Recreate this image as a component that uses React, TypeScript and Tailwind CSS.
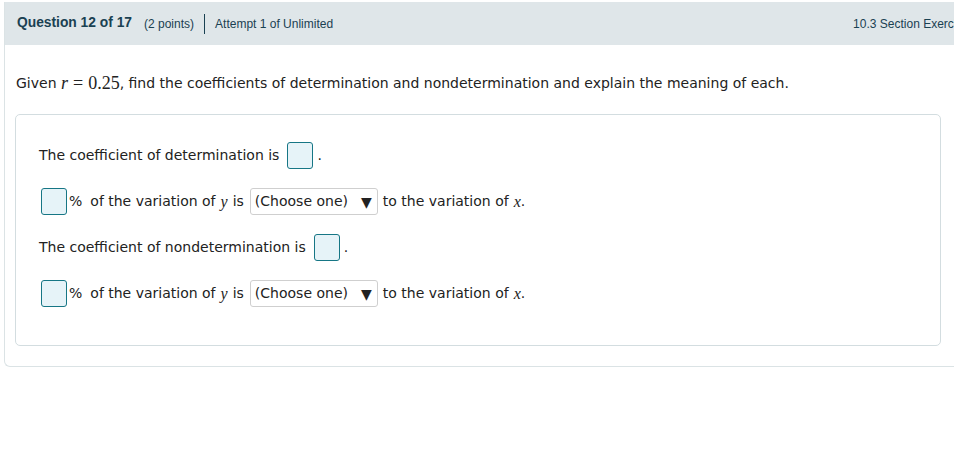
import React from "react";

const sans = "font-['Liberation_Sans',Arial,sans-serif]";
const body = "font-['DejaVu_Sans',Verdana,sans-serif]";
const math = "font-['Liberation_Serif','Times_New_Roman',serif]";

function Blank() {
  return (
    <span className="inline-block w-[26px] h-[27px] rounded-[3px] border border-[#167685] bg-[#e6f3f8] align-middle" />
  );
}

function ChooseOne() {
  return (
    <span className="inline-flex items-center h-[27px] w-[128px] px-[4px] rounded-[3px] border border-[#cfcfcf] bg-white text-[14px] text-[#222] align-middle">
      <span>(Choose one)</span>
      <span className="ml-auto mr-[1px] text-[14px] leading-none">▼</span>
    </span>
  );
}

function VariationRow() {
  return (
    <div className="flex items-center h-[27px] pl-[2px]">
      <Blank />
      <span className="ml-[2px]">%</span>
      <span className="ml-[8px]">of the variation of</span>
      <span className={`${math} italic text-[16px] ml-[5px]`}>y</span>
      <span className="ml-[5px]">is</span>
      <span className="ml-[6px]">
        <ChooseOne />
      </span>
      <span className="ml-[5px]">to the variation of</span>
      <span className={`${math} italic text-[16px] ml-[5px]`}>x</span>
      <span>.</span>
    </div>
  );
}

function CoefRow({ label }: { label: string }) {
  return (
    <div className="flex items-center h-[27px]">
      <span>{label}</span>
      <span className="ml-[8px]">
        <Blank />
      </span>
      <span className="ml-[4px]">.</span>
    </div>
  );
}

export default function App() {
  return (
    <div className="w-[954px] h-[452px] overflow-hidden bg-white">
      <div className="ml-[4px] mt-[2px] w-[1100px] border-l border-b border-[#dbe3e5] rounded-bl-[6px]">
        <div className={`${sans} h-[43px] bg-[#dfe6e9] flex items-center pl-[12px] text-[#1a4152]`}>
          <span className="text-[13.8px] font-bold">Question 12 of 17</span>
          <span className="text-[12px] ml-[12px]">(2 points)</span>
          <span className="w-px h-[20px] bg-[#1a4152] ml-[10px]" />
          <span className="text-[12px] ml-[10px]">Attempt 1 of Unlimited</span>
          <span className="text-[12px] ml-[520px] whitespace-nowrap">10.3 Section Exercises</span>
        </div>
        <div className="flex">
          <div className={`${body} w-[946px] pl-[10px] pb-[20px] text-[14px] text-[#222]`}>
            <p className="mt-[28px] ml-[1px] h-[20px] flex items-center whitespace-nowrap">
              Given&nbsp;
              <span className={`${math} text-[18px] flex items-center`}>
                <i>r</i>
                <span className="mx-[5px]">=</span>
                0.25
              </span>
              , find the coefficients of determination and nondetermination and explain the meaning of each.
            </p>
            <div className="mt-[21px] w-[926px] h-[232px] border border-[#d3dde0] rounded-[5px] pt-[27px] pl-[23px] flex flex-col gap-[19px]">
              <CoefRow label="The coefficient of determination is" />
              <VariationRow />
              <CoefRow label="The coefficient of nondetermination is" />
              <VariationRow />
            </div>
          </div>
          <div className="mt-[10px] ml-[4px] w-[100px] h-[305px] border border-[#d5dde0] rounded-l-[6px] flex flex-col">
            <span className="mt-[74px] ml-[2px] w-px h-px bg-[#c5ced2]" />
            <span className="mt-[37px] ml-[2px] w-px h-px bg-[#c5ced2]" />
            <span className="mt-[37px] ml-[2px] w-px h-px bg-[#c5ced2]" />
          </div>
        </div>
      </div>
    </div>
  );
}
